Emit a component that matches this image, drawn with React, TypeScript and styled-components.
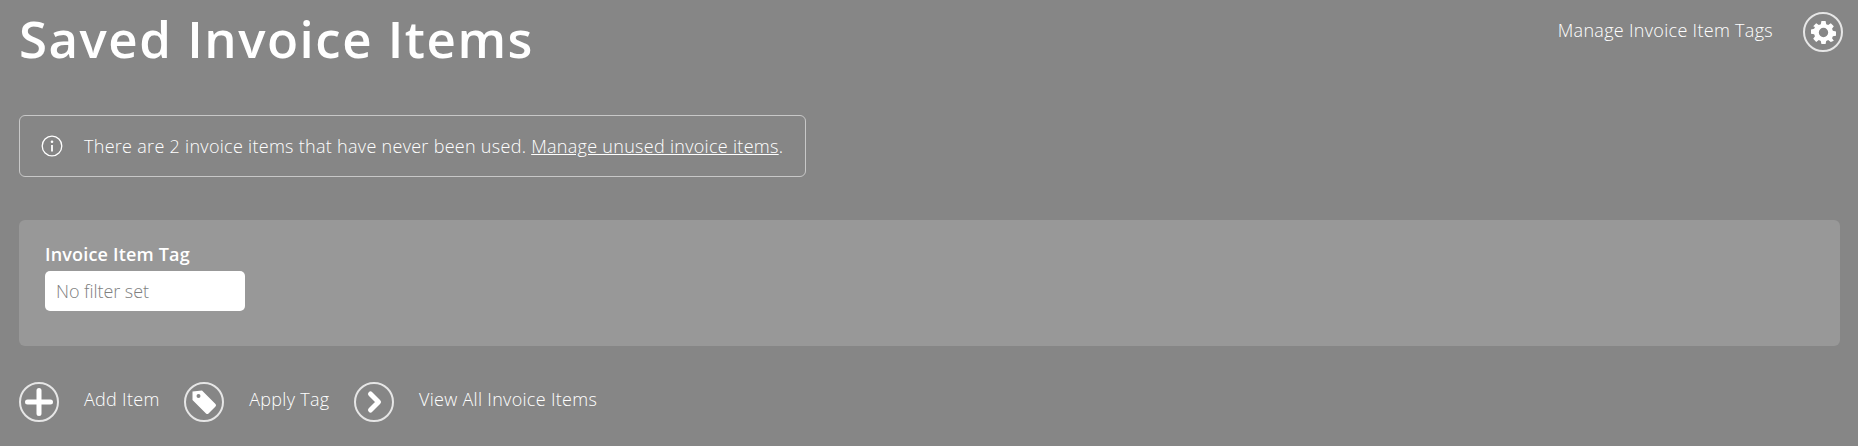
import React from "react";
import styled, { createGlobalStyle } from "styled-components";

const Global = createGlobalStyle`
  html, body { margin: 0; padding: 0; background: #868686; }
  body { font-family: "Open Sans", "Liberation Sans", sans-serif; color: #fff; }
`;

const Page = styled.div`
  height: 446px;
  padding: 0 18px 0 19px;
  box-sizing: border-box;
  overflow: hidden;
  display: flex;
  flex-direction: column;
`;

const Header = styled.header`
  display: flex;
  justify-content: space-between;
  align-items: flex-start;
  height: 115px;
`;

const Title = styled.h1`
  margin: 7px 0 0;
  font-size: 51px;
  line-height: 62px;
  font-weight: 600;
  letter-spacing: 1.5px;
  color: #fff;
`;

const HeaderActions = styled.div`
  display: flex;
  align-items: center;
  gap: 30px;
  padding-top: 12px;
  margin-right: -3px;
`;

const HeaderLink = styled.a`
  font-size: 18px;
  font-weight: 340;
  letter-spacing: 0.3px;
  color: #fff;
  margin-top: -5px;
`;

const CircleIcon = styled.span`
  width: 40px;
  height: 40px;
  box-sizing: border-box;
  border: 2px solid #e6e6e6;
  border-radius: 50%;
  display: flex;
  align-items: center;
  justify-content: center;
  flex: none;
`;

const Notice = styled.div`
  width: 787px;
  height: 62px;
  box-sizing: border-box;
  border: 1px solid #c8c8c8;
  border-radius: 6px;
  display: flex;
  align-items: center;
  padding-left: 21px;
  gap: 21px;
  font-size: 18px;
  font-weight: 340;
  letter-spacing: 0.29px;
`;

const NoticeLink = styled.a`
  color: #fff;
  text-decoration: underline;
`;

const FilterPanel = styled.section`
  margin-top: 43px;
  height: 126px;
  box-sizing: border-box;
  background: #989898;
  border-radius: 6px;
  padding: 22px 26px;
`;

const FilterLabel = styled.label`
  display: block;
  font-size: 18px;
  font-weight: 600;
  line-height: 24px;
  letter-spacing: 0.18px;
`;

const FilterInput = styled.div`
  width: 200px;
  height: 40px;
  box-sizing: border-box;
  background: #fff;
  border-radius: 5px;
  padding-left: 11px;
  margin-top: 5px;
  display: flex;
  align-items: center;
  font-size: 18px;
  font-weight: 300;
  letter-spacing: -0.05px;
  color: #808080;
`;

const ActionBar = styled.nav`
  margin-top: 36px;
  display: flex;
  align-items: center;
  gap: 24.5px;
`;

const Action = styled.a`
  display: flex;
  align-items: center;
  gap: 25px;
  font-size: 18px;
  font-weight: 340;
  letter-spacing: 0.3px;
  color: #fff;
`;

const ActionLabel = styled.span`
  margin-top: -6px;
`;

const Gear = () => (
  <svg width="25" height="25" viewBox="0 0 24 24" fill="#fff">
    <path
      fillRule="evenodd"
      d="M10 1h4l.6 3 1.900.8L19 3.100 21.900 6l-1.700 2.500.8 1.900 3 .6v4l-3 .6-.8 1.900 1.700 2.500L19 21l-2.500-1.700-1.900.8-.6 3h-4l-.6-3-1.900-.8L5 21l-2.900-2.900 1.700-2.500-.8-1.900-3-.6v-4l3-.6.8-1.900L2.100 6 5 3.100l2.500 1.700 1.900-.8zM12 7.500a4.500 4.500 0 1 0 0 9 4.500 4.500 0 0 0 0-9z"
    />
  </svg>
);

const Plus = () => (
  <svg width="30" height="30" viewBox="0 0 30 30">
    <path d="M15 3.500v23M3.500 15h23" stroke="#fff" strokeWidth="5" strokeLinecap="round" />
  </svg>
);

const Tag = () => (
  <svg width="30" height="30" viewBox="0 0 30 30">
    <path
      fill="#fff"
      fillRule="evenodd"
      d="M3.500 4.500 13 3.500 26.500 17a1.800 1.800 0 0 1 0 2.500L19.500 26.500a1.800 1.800 0 0 1-2.500 0L3.500 13zM9.500 7a2 2 0 1 0 0 4 2 2 0 0 0 0-4z"
    />
  </svg>
);

const Chevron = () => (
  <svg width="22" height="24" viewBox="0 0 22 24">
    <path d="M7.500 4l8 8-8 8" fill="none" stroke="#fff" strokeWidth="5" strokeLinecap="round" strokeLinejoin="round" />
  </svg>
);

const Info = () => (
  <svg width="22" height="22" viewBox="0 0 22 22" fill="none">
    <circle cx="11" cy="11" r="9.800" stroke="#fff" strokeWidth="1.300" />
    <path d="M11 10v6.500" stroke="#fff" strokeWidth="1.800" />
    <circle cx="11" cy="6.700" r="1.300" fill="#fff" />
  </svg>
);

export default function App() {
  return (
    <Page>
      <Global />
      <Header>
        <Title>Saved Invoice Items</Title>
        <HeaderActions>
          <HeaderLink>Manage Invoice Item Tags</HeaderLink>
          <CircleIcon>
            <Gear />
          </CircleIcon>
        </HeaderActions>
      </Header>
      <Notice>
        <Info />
        <span>
          There are 2 invoice items that have never been used. <NoticeLink>Manage unused invoice items</NoticeLink>.
        </span>
      </Notice>
      <FilterPanel>
        <FilterLabel>Invoice Item Tag</FilterLabel>
        <FilterInput>No filter set</FilterInput>
      </FilterPanel>
      <ActionBar>
        <Action>
          <CircleIcon><Plus /></CircleIcon>
          <ActionLabel>Add Item</ActionLabel>
        </Action>
        <Action>
          <CircleIcon><Tag /></CircleIcon>
          <ActionLabel>Apply Tag</ActionLabel>
        </Action>
        <Action>
          <CircleIcon><Chevron /></CircleIcon>
          <ActionLabel>View All Invoice Items</ActionLabel>
        </Action>
      </ActionBar>
    </Page>
  );
}
